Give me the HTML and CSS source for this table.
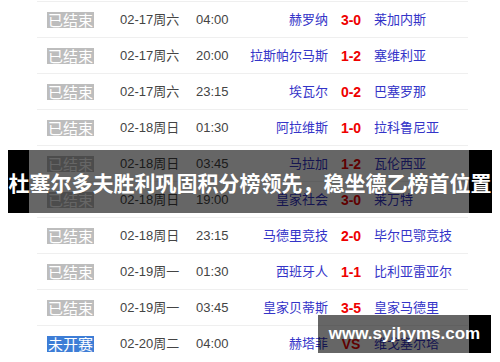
FILE: index.html
```html
<!DOCTYPE html>
<html lang="zh-CN">
<head>
<meta charset="utf-8">
<title>德甲赛程</title>
<link rel="stylesheet" href="styles.css">
</head>
<body>
<div class="article">
  <div class="figure">
    <div class="schedule">
      <div class="row">
        <div class="c-status"><span class="badge done">已结束</span></div>
        <div class="c-date">02-17周六</div>
        <div class="c-time">04:00</div>
        <div class="c-home">赫罗纳</div>
        <div class="c-score">3-0</div>
        <div class="c-away">莱加内斯</div>
      </div>
      <div class="row">
        <div class="c-status"><span class="badge done">已结束</span></div>
        <div class="c-date">02-17周六</div>
        <div class="c-time">20:00</div>
        <div class="c-home">拉斯帕尔马斯</div>
        <div class="c-score">1-2</div>
        <div class="c-away">塞维利亚</div>
      </div>
      <div class="row">
        <div class="c-status"><span class="badge done">已结束</span></div>
        <div class="c-date">02-17周六</div>
        <div class="c-time">23:15</div>
        <div class="c-home">埃瓦尔</div>
        <div class="c-score">0-2</div>
        <div class="c-away">巴塞罗那</div>
      </div>
      <div class="row">
        <div class="c-status"><span class="badge done">已结束</span></div>
        <div class="c-date">02-18周日</div>
        <div class="c-time">01:30</div>
        <div class="c-home">阿拉维斯</div>
        <div class="c-score">1-0</div>
        <div class="c-away">拉科鲁尼亚</div>
      </div>
      <div class="row">
        <div class="c-status"><span class="badge done">已结束</span></div>
        <div class="c-date">02-18周日</div>
        <div class="c-time">03:45</div>
        <div class="c-home">马拉加</div>
        <div class="c-score">1-2</div>
        <div class="c-away">瓦伦西亚</div>
      </div>
      <div class="row">
        <div class="c-status"><span class="badge done">已结束</span></div>
        <div class="c-date">02-18周日</div>
        <div class="c-time">19:00</div>
        <div class="c-home">皇家社会</div>
        <div class="c-score">3-0</div>
        <div class="c-away">莱万特</div>
      </div>
      <div class="row">
        <div class="c-status"><span class="badge done">已结束</span></div>
        <div class="c-date">02-18周日</div>
        <div class="c-time">23:15</div>
        <div class="c-home">马德里竞技</div>
        <div class="c-score">2-0</div>
        <div class="c-away">毕尔巴鄂竞技</div>
      </div>
      <div class="row">
        <div class="c-status"><span class="badge done">已结束</span></div>
        <div class="c-date">02-19周一</div>
        <div class="c-time">01:30</div>
        <div class="c-home">西班牙人</div>
        <div class="c-score">1-1</div>
        <div class="c-away">比利亚雷亚尔</div>
      </div>
      <div class="row">
        <div class="c-status"><span class="badge done">已结束</span></div>
        <div class="c-date">02-19周一</div>
        <div class="c-time">03:45</div>
        <div class="c-home">皇家贝蒂斯</div>
        <div class="c-score">3-5</div>
        <div class="c-away">皇家马德里</div>
      </div>
      <div class="row">
        <div class="c-status"><span class="badge upcoming">未开赛</span></div>
        <div class="c-date">02-20周二</div>
        <div class="c-time">04:00</div>
        <div class="c-home">赫塔菲</div>
        <div class="c-score vs">VS</div>
        <div class="c-away">维戈塞尔塔</div>
      </div>
    </div>
  </div>
  <div class="caption">杜塞尔多夫胜利巩固积分榜领先，稳坐德乙榜首位置</div>
  <div class="watermark">www.syjhyms.com</div>
</div>
</body>
</html>
```

FILE: styles.css
```css
html, body {
  margin: 0;
  padding: 0;
  background: #fff;
  overflow: hidden;
}

body {
  font-family: "Liberation Sans", "Noto Sans CJK SC", sans-serif;
}

.article {
  position: relative;
  width: 484px;
  height: 362px;
  margin: 0 8px;
}

.figure {
  width: 440px;
  margin-left: 21px;
  padding-top: 1px;
}

.schedule {
  width: 431px;
  margin-left: 8px;
}

.row {
  display: grid;
  grid-template-columns: 83px 76px 50px 82px 46px 1fr;
  align-items: center;
  height: 36px;
  box-sizing: border-box;
  border-top: 1px solid #efefef;
  font-size: 13px;
  line-height: 16px;
  white-space: nowrap;
}

.c-status {
  padding-left: 10px;
  display: flex;
}

.badge {
  display: inline-block;
  font-family: "Noto Sans CJK SC", sans-serif;
  font-size: 15px;
  line-height: 16px;
  height: 16px;
  padding: 0 1px;
  color: #fff;
}

.badge.done {
  background: #bdbdbd;
}

.badge.upcoming {
  background: #3d7dd6;
}

.c-date,
.c-time {
  color: #444;
}

.c-home {
  text-align: right;
  color: #3434c8;
}

.c-away {
  color: #3434c8;
}

.c-score {
  text-align: center;
  color: #e00;
  font-weight: bold;
  font-size: 14px;
}

.caption {
  position: absolute;
  left: 0;
  top: 150px;
  width: 484px;
  height: 63px;
  display: flex;
  align-items: center;
  justify-content: center;
  background: linear-gradient(to right, #000 21px, rgba(0, 0, 0, 0.6) 21px, rgba(0, 0, 0, 0.6) 461px, #000 461px);
  color: #fff;
  font-family: "Noto Sans CJK SC", sans-serif;
  font-weight: bold;
  font-size: 21px;
  white-space: nowrap;
}

.watermark {
  position: absolute;
  left: 310px;
  top: 315px;
  width: 173px;
  height: 38px;
  display: flex;
  align-items: center;
  justify-content: center;
  background: linear-gradient(to right, rgba(0, 0, 0, 0.6) 151px, #000 151px);
  color: #fff;
  font-family: "Liberation Sans", sans-serif;
  font-weight: bold;
  font-size: 17px;
  white-space: nowrap;
}
```
